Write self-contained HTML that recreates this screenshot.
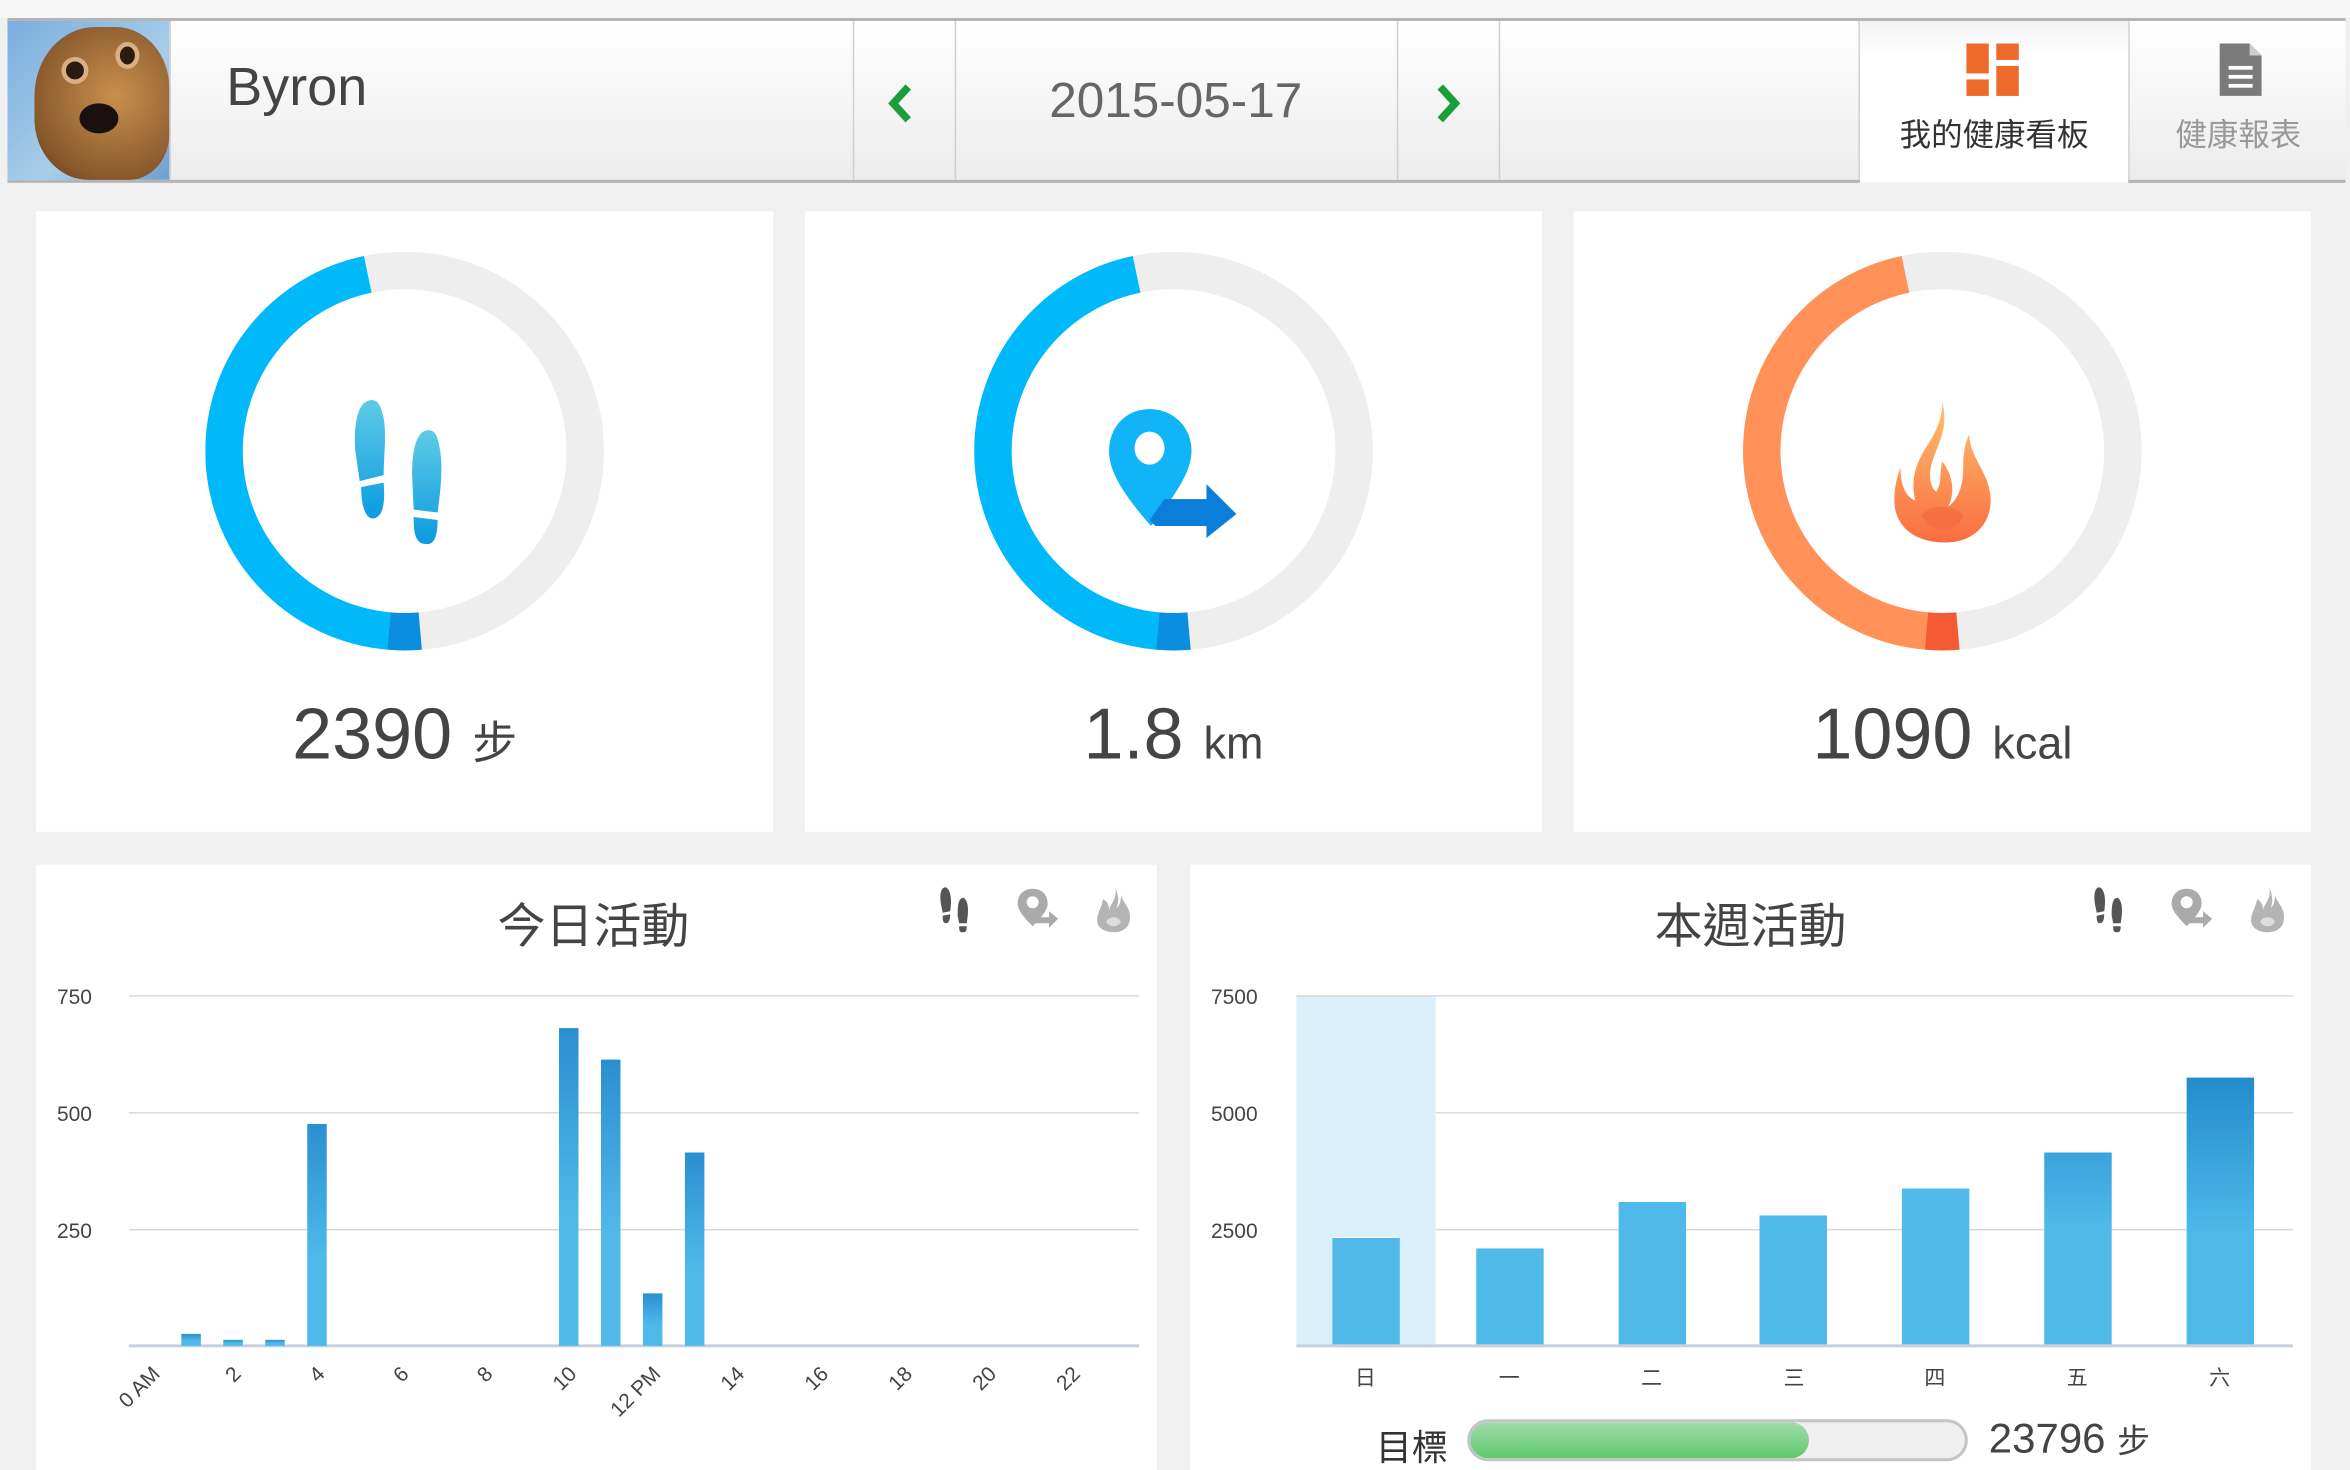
<!DOCTYPE html>
<html><head><meta charset="utf-8"><style>
*{margin:0;padding:0;box-sizing:border-box}
html,body{width:2350px;height:1470px;overflow:hidden;background:#f0f0f0}
#w{position:absolute;left:0;top:0;width:1568px;height:981px;transform:scale(1.49872);transform-origin:0 0;font-family:"Liberation Sans","Noto Sans CJK TC",sans-serif;color:#444}
.a{position:absolute}
.top{left:5px;top:12px;width:1560px;height:110px;background:linear-gradient(#fff,#ececec);border-top:2px solid #b4b4b4;border-bottom:2px solid #b4b4b4}
.sep{position:absolute;top:14px;width:1px;height:106px;background:#cfcfcf}
.card{position:absolute;background:#fff}
.big{position:absolute;text-align:center;width:100%}
.ax{position:absolute;font-size:14px;color:#444}
.gl{position:absolute;height:1px;background:#d8d8d8}
.bar{position:absolute;background:linear-gradient(#2a8fd0,#4fb9ea 60%)}
.wb{position:absolute;background:#4fbaea}
.xl{position:absolute;font-size:14px;color:#444;transform:rotate(-45deg);transform-origin:right center;white-space:nowrap;text-align:right;width:40px}
</style></head><body><div id="w">
<div class="a" style="left:0;top:0;width:1568px;height:12px;background:#f7f7f7"></div>
<div class="a top"></div>
<div class="a" style="left:5px;top:14px;width:108px;height:106px;background:linear-gradient(135deg,#7aaee0,#a8cde8 60%,#6f9fd0)">
 <div class="a" style="left:18px;top:4px;width:90px;height:102px;border-radius:45% 40% 30% 40%;background:radial-gradient(circle at 60% 45%,#c7904f,#8a5a2c 70%,#5e3a1a)"></div>
 <div class="a" style="left:36px;top:24px;width:18px;height:18px;border-radius:50%;background:#2b1a10;border:3px solid #d9b084"></div>
 <div class="a" style="left:72px;top:14px;width:16px;height:18px;border-radius:50%;background:#2b1a10;border:3px solid #d9b084"></div>
 <div class="a" style="left:48px;top:55px;width:26px;height:20px;border-radius:50%;background:#1a1010"></div>
</div>
<div class="sep" style="left:113px"></div>
<div class="a" style="left:151px;top:37px;font-size:36px;color:#444">Byron</div>
<div class="sep" style="left:569px"></div><div class="sep" style="left:637px"></div><div class="sep" style="left:932px"></div><div class="sep" style="left:1000px"></div><div class="sep" style="left:1240px"></div><div class="sep" style="left:1420px"></div>
<svg class="a" style="left:590px;top:55px" width="22" height="30"><path d="M16 3 L6 14 L16 25" fill="none" stroke="#1a9e3a" stroke-width="5"/></svg>
<svg class="a" style="left:955px;top:55px" width="22" height="30"><path d="M6 3 L16 14 L6 25" fill="none" stroke="#1a9e3a" stroke-width="5"/></svg>
<div class="a" style="left:637px;top:48px;width:295px;text-align:center;font-size:33px;color:#666">2015-05-17</div>
<div class="a" style="left:1241px;top:14px;width:179px;height:108px;background:linear-gradient(#f3f3f3,#fff 20%)"></div>
<svg class="a" style="left:1312px;top:29px" width="36" height="36"><rect x="0" y="0" width="15" height="20" fill="#ee6a2a"/><rect x="20" y="0" width="15" height="11" fill="#ee6a2a"/><rect x="0" y="24" width="15" height="11" fill="#ee6a2a"/><rect x="20" y="15" width="15" height="20" fill="#ee6a2a"/></svg>
<div class="a" style="left:1241px;top:74px;width:179px;text-align:center;font-size:21px;color:#333">我的健康看板</div>
<svg class="a" style="left:1481px;top:29px" width="30" height="36"><path d="M0 0 H20 L28 8 V35 H0 Z" fill="#7a7a7a"/><path d="M20 0 V8 H28" fill="#ccc"/><rect x="6" y="15" width="16" height="2.5" fill="#fff"/><rect x="6" y="21" width="16" height="2.5" fill="#fff"/><rect x="6" y="27" width="16" height="2.5" fill="#fff"/></svg>
<div class="a" style="left:1421px;top:74px;width:145px;text-align:center;font-size:21px;color:#999">健康報表</div>

<!-- cards -->
<div class="card" style="left:24px;top:141px;width:492px;height:414px">
 <svg class="a" style="left:113px;top:27px" width="266" height="266"><g transform="rotate(-90 133 133)"><circle cx="133" cy="133" r="120.5" fill="none" stroke="#eeeeee" stroke-width="25"/><circle cx="133" cy="133" r="120.5" fill="none" stroke="#00b9fa" stroke-width="25" stroke-dasharray="343 1000" stroke-dashoffset="-389"/><circle cx="133" cy="133" r="120.5" fill="none" stroke="#0a8ee0" stroke-width="25" stroke-dasharray="21 1000" stroke-dashoffset="-368"/></g></svg>
 <svg class="a" style="left:210px;top:124px" width="72" height="100"><defs><linearGradient id="fp" x1="0" y1="0" x2="0" y2="1"><stop offset="0" stop-color="#5fcbe6"/><stop offset="1" stop-color="#0a9be0"/></linearGradient></defs><path d="M14 2 C4 2 2 20 3 35 L6 56 L22 52 C22 40 24 25 22 14 C20 5 18 2 14 2Z M7 60 L22 57 C23 70 22 80 15 81 C9 81 7 70 7 60Z" fill="url(#fp)"/><path d="M52 22 C43 22 41 38 41 52 L42 75 L58 77 C60 62 62 45 59 32 C58 26 56 22 52 22Z M42 80 L58 82 C58 92 56 99 50 98 C43 98 42 90 42 80Z" fill="url(#fp)"/></svg>
 <div class="big" style="top:322px;font-size:48px;color:#444">2390 <span style="font-size:30px">步</span></div>
</div>
<div class="card" style="left:537px;top:141px;width:492px;height:414px">
 <svg class="a" style="left:113px;top:27px" width="266" height="266"><g transform="rotate(-90 133 133)"><circle cx="133" cy="133" r="120.5" fill="none" stroke="#eeeeee" stroke-width="25"/><circle cx="133" cy="133" r="120.5" fill="none" stroke="#00b9fa" stroke-width="25" stroke-dasharray="343 1000" stroke-dashoffset="-389"/><circle cx="133" cy="133" r="120.5" fill="none" stroke="#0a8ee0" stroke-width="25" stroke-dasharray="21 1000" stroke-dashoffset="-368"/></g></svg>
 <svg class="a" style="left:200px;top:130px" width="92" height="90"><path d="M30 2 C14 2 3 14 3 30 C3 42 10 56 31 80 C50 56 58 42 58 30 C58 14 46 2 30 2Z" fill="#11b4f6"/><ellipse cx="30" cy="28" rx="10" ry="11" fill="#fff"/><path d="M30 76 L40 62 H68 V52 L88 72 L68 88 V80 H34Z" fill="#0a7ed8"/></svg>
 <div class="big" style="top:322px;font-size:48px;color:#444">1.8 <span style="font-size:30px">km</span></div>
</div>
<div class="card" style="left:1050px;top:141px;width:492px;height:414px">
 <svg class="a" style="left:113px;top:27px" width="266" height="266"><g transform="rotate(-90 133 133)"><circle cx="133" cy="133" r="120.5" fill="none" stroke="#eeeeee" stroke-width="25"/><circle cx="133" cy="133" r="120.5" fill="none" stroke="#ff9159" stroke-width="25" stroke-dasharray="343 1000" stroke-dashoffset="-389"/><circle cx="133" cy="133" r="120.5" fill="none" stroke="#f65a35" stroke-width="25" stroke-dasharray="21 1000" stroke-dashoffset="-368"/></g></svg>
 <svg class="a" style="left:210px;top:125px" width="72" height="100"><defs><linearGradient id="fl" x1="0" y1="0" x2="0" y2="1"><stop offset="0" stop-color="#ffc170"/><stop offset="1" stop-color="#f96d40"/></linearGradient></defs><path d="M36 2 C40 20 34 28 30 40 C26 50 28 60 32 62 C36 56 34 48 36 42 C44 52 44 64 40 72 C48 66 50 56 50 44 C50 34 52 28 54 24 C54 38 66 48 68 64 C70 82 58 96 38 96 C16 96 4 84 4 68 C4 58 6 52 8 46 C8 58 12 66 18 68 C14 52 20 40 28 28 C34 18 36 10 36 2Z" fill="url(#fl)"/><path d="M22 78 C28 70 44 70 50 78 C46 90 28 90 22 78Z" fill="#f46a3e" opacity=".7"/></svg>
 <div class="big" style="top:322px;font-size:48px;color:#444">1090 <span style="font-size:30px">kcal</span></div>
</div>

<!-- today -->
<div class="card" style="left:24px;top:577px;width:748px;height:404px">
 <div class="a" style="left:0;top:16px;width:748px;text-align:center;font-size:32px;color:#444;padding-right:4px">今日活動</div>
</div>
<!-- week -->
<div class="card" style="left:794px;top:577px;width:748px;height:404px"></div>
<div class="a" style="left:794px;top:593px;width:748px;text-align:center;font-size:32px;color:#444">本週活動</div>

<!-- small icons -->
<svg class="a" style="left:626px;top:591px" width="26" height="32"><path d="M5 1C1 1 1 8 2 13L3 18L8 17C9 11 9 3 5 1Z M3 20L8 19C8 23 7 25 5 25C3 25 3 22 3 20Z M17 8C13 8 13 15 13 20L14 25L19 25C20 19 21 11 17 8Z M14 27L19 27C19 31 18 31 16 31C14 31 14 29 14 27Z" fill="#555"/></svg>
<svg class="a" style="left:678px;top:592px" width="30" height="30"><path d="M11 1C5 1 1 5 1 11C1 15 5 20 11 26C17 20 21 15 21 11C21 5 17 1 11 1Z" fill="#aaa"/><circle cx="11" cy="10" r="4" fill="#fff"/><path d="M11 24L15 20H22V16L28 21L22 27V24Z" fill="#aaa"/></svg>
<svg class="a" style="left:731px;top:591px" width="24" height="32"><path d="M13 1C15 8 10 12 9 16C9 12 7 10 5 9C4 15 1 18 1 23C1 28 6 31 12 31C18 31 23 28 23 21C23 14 18 11 17 6C17 12 15 14 14 15C16 10 15 5 13 1Z" fill="#b4b4b4"/><path d="M7 24C9 20 15 20 17 24C15 28 9 28 7 24Z" fill="#ddd"/></svg>
<svg class="a" style="left:1396px;top:591px" width="26" height="32"><path d="M5 1C1 1 1 8 2 13L3 18L8 17C9 11 9 3 5 1Z M3 20L8 19C8 23 7 25 5 25C3 25 3 22 3 20Z M17 8C13 8 13 15 13 20L14 25L19 25C20 19 21 11 17 8Z M14 27L19 27C19 31 18 31 16 31C14 31 14 29 14 27Z" fill="#555"/></svg>
<svg class="a" style="left:1448px;top:592px" width="30" height="30"><path d="M11 1C5 1 1 5 1 11C1 15 5 20 11 26C17 20 21 15 21 11C21 5 17 1 11 1Z" fill="#aaa"/><circle cx="11" cy="10" r="4" fill="#fff"/><path d="M11 24L15 20H22V16L28 21L22 27V24Z" fill="#aaa"/></svg>
<svg class="a" style="left:1501px;top:591px" width="24" height="32"><path d="M13 1C15 8 10 12 9 16C9 12 7 10 5 9C4 15 1 18 1 23C1 28 6 31 12 31C18 31 23 28 23 21C23 14 18 11 17 6C17 12 15 14 14 15C16 10 15 5 13 1Z" fill="#b4b4b4"/><path d="M7 24C9 20 15 20 17 24C15 28 9 28 7 24Z" fill="#ddd"/></svg>

<!-- today chart -->
<div class="gl" style="left:86px;top:664px;width:674px"></div>
<div class="gl" style="left:86px;top:742px;width:674px"></div>
<div class="gl" style="left:86px;top:820px;width:674px"></div>
<div class="gl" style="left:86px;top:897px;width:674px;background:#c8d0dc;height:2px"></div>
<div class="ax" style="left:38px;top:657px">750</div>
<div class="ax" style="left:38px;top:735px">500</div>
<div class="ax" style="left:38px;top:813px">250</div>
<div class="bar" style="left:121px;top:890px;width:13px;height:8px"></div>
<div class="bar" style="left:149px;top:894px;width:13px;height:4px"></div>
<div class="bar" style="left:177px;top:894px;width:13px;height:4px"></div>
<div class="bar" style="left:205px;top:750px;width:13px;height:148px"></div>
<div class="bar" style="left:373px;top:686px;width:13px;height:212px"></div>
<div class="bar" style="left:401px;top:707px;width:13px;height:191px"></div>
<div class="bar" style="left:429px;top:863px;width:13px;height:35px"></div>
<div class="bar" style="left:457px;top:769px;width:13px;height:129px"></div>
<div class="xl" style="left:58px;top:906px;width:46px">0 AM</div>
<div class="xl" style="left:118px;top:906px">2</div>
<div class="xl" style="left:174px;top:906px">4</div>
<div class="xl" style="left:230px;top:906px">6</div>
<div class="xl" style="left:286px;top:906px">8</div>
<div class="xl" style="left:342px;top:906px">10</div>
<div class="xl" style="left:388px;top:906px;width:50px">12 PM</div>
<div class="xl" style="left:454px;top:906px">14</div>
<div class="xl" style="left:510px;top:906px">16</div>
<div class="xl" style="left:566px;top:906px">18</div>
<div class="xl" style="left:622px;top:906px">20</div>
<div class="xl" style="left:678px;top:906px">22</div>

<!-- week chart -->
<div class="a" style="left:865px;top:664px;width:93px;height:234px;background:#dcf0fb"></div>
<div class="gl" style="left:865px;top:664px;width:665px"></div>
<div class="gl" style="left:958px;top:742px;width:572px"></div>
<div class="gl" style="left:958px;top:820px;width:572px"></div>
<div class="gl" style="left:865px;top:897px;width:665px;background:#c8d0dc;height:2px"></div>
<div class="ax" style="left:808px;top:657px">7500</div>
<div class="ax" style="left:808px;top:735px">5000</div>
<div class="ax" style="left:808px;top:813px">2500</div>
<div class="wb" style="left:889px;top:825px;width:45px;height:72px;border-top:1px solid #fff"></div>
<div class="wb" style="left:985px;top:833px;width:45px;height:64px"></div>
<div class="wb" style="left:1080px;top:802px;width:45px;height:95px"></div>
<div class="wb" style="left:1174px;top:811px;width:45px;height:86px"></div>
<div class="wb" style="left:1269px;top:793px;width:45px;height:104px"></div>
<div class="wb" style="left:1364px;top:769px;width:45px;height:128px;background:linear-gradient(#3aa3dc,#4fbaea 40%)"></div>
<div class="wb" style="left:1459px;top:719px;width:45px;height:178px;background:linear-gradient(#238ccd,#4fbaea 60%)"></div>
<div class="ax" style="left:904px;top:909px">日</div>
<div class="ax" style="left:1000px;top:909px">一</div>
<div class="ax" style="left:1095px;top:909px">二</div>
<div class="ax" style="left:1190px;top:909px">三</div>
<div class="ax" style="left:1284px;top:909px">四</div>
<div class="ax" style="left:1379px;top:909px">五</div>
<div class="ax" style="left:1474px;top:909px">六</div>
<div class="a" style="left:918px;top:946px;font-size:24px;color:#333">目標</div>
<div class="a" style="left:979px;top:947px;width:334px;height:28px;border-radius:14px;border:2px solid #c4c4c4;background:#efefef;overflow:hidden"><div style="width:226px;height:100%;border-radius:12px;background:linear-gradient(#a0dca8,#5ec96f)"></div></div>
<div class="a" style="left:1327px;top:944px;font-size:28px;color:#444">23796 <span style="font-size:22px">步</span></div>
</div></body></html>
